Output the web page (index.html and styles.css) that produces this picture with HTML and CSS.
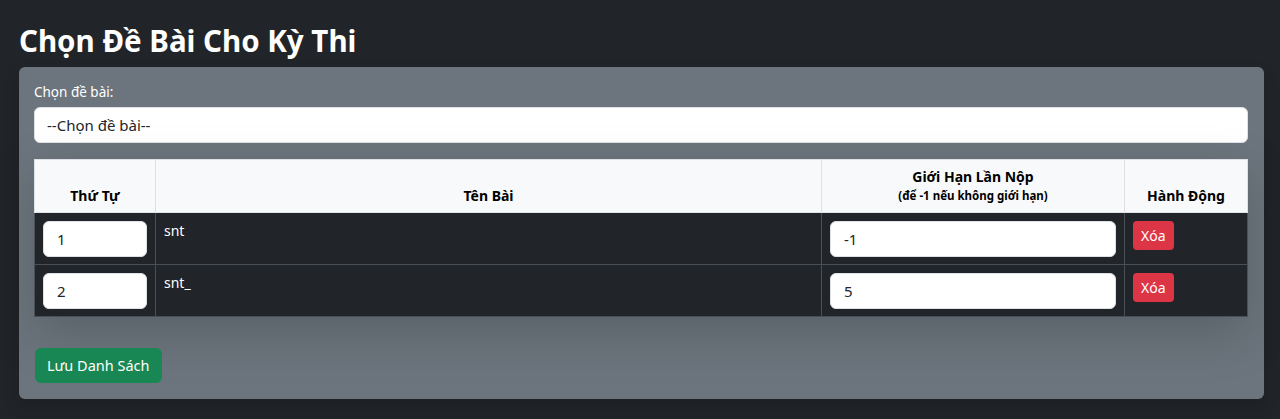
FILE: index.html
```html
<!DOCTYPE html>
<html lang="vi">
<head>
<meta charset="utf-8">
<title>Chọn Đề Bài Cho Kỳ Thi</title>
<link rel="stylesheet" href="styles.css">
</head>
<body>
<div class="page">
  <h2 class="title">Chọn Đề Bài Cho Kỳ Thi</h2>
  <div class="panel">
    <label class="label" for="de">Chọn đề bài:</label>
    <div class="select" id="de">--Chọn đề bài--</div>
    <table class="tbl">
      <thead>
        <tr>
          <th class="c-order">Thứ Tự</th>
          <th class="c-name">Tên Bài</th>
          <th class="c-limit">Giới Hạn Lần Nộp<br><small>(để -1 nếu không giới hạn)</small></th>
          <th class="c-act">Hành Động</th>
        </tr>
      </thead>
      <tbody>
        <tr>
          <td><div class="input">1</div></td>
          <td>snt</td>
          <td><div class="input">-1</div></td>
          <td><span class="btn-del">Xóa</span></td>
        </tr>
        <tr>
          <td><div class="input">2</div></td>
          <td>snt_</td>
          <td><div class="input">5</div></td>
          <td><span class="btn-del">Xóa</span></td>
        </tr>
      </tbody>
    </table>
    <div class="actions"><span class="btn-save">Lưu Danh Sách</span></div>
  </div>
</div>
</body>
</html>
```
FILE: styles.css
```css
* { box-sizing: border-box; }
html, body { margin: 0; padding: 0; }
body {
  background: #212529;
  color: #dee2e6;
  font-family: "Noto Sans", "Open Sans", sans-serif;
  font-size: 16px;
  line-height: 1.5;
  height: 419px;
  overflow: hidden;
}
.page {
  padding: 23px 16px 0 19px;
}
.title {
  margin: 0 0 8px 0;
  font-size: 29.5px;
  line-height: 36px;
  font-weight: 700;
  color: #fff;
}
.panel {
  background: #6c757d;
  border-radius: 6px;
  padding: 15px 16px 16px 15px;
  box-shadow: 0 8px 16px rgba(0,0,0,.15);
}
.label {
  display: block;
  font-size: 13.5px;
  line-height: 20px;
  color: #fff;
  margin-bottom: 5px;
}
.select {
  background: #fff;
  color: #212529;
  border: 1px solid #dee2e6;
  border-radius: 6px;
  height: 36px;
  padding: 6px 12px;
  font-size: 15px;
  line-height: 22px;
  margin-bottom: 16px;
}
.tbl {
  width: 100%;
  border-collapse: collapse;
  font-size: 14px;
  box-shadow: 0 16px 48px rgba(0,0,0,.175);
}
.tbl th, .tbl td {
  border: 1px solid #495057;
  padding: 8px 8px 7px;
}
.tbl th {
  background: #f8f9fa;
  color: #000;
  border-color: #dee2e6;
  font-weight: 700;
  text-align: center;
  vertical-align: bottom;
  line-height: 18px;
  padding: 8px 8px 7px;
}
.tbl th small { font-size: 11.5px; }
.tbl td {
  background: #212529;
  color: #fff;
  vertical-align: top;
  line-height: 20px;
}
.c-order { width: 121px; }
.c-limit { width: 303px; }
.c-act { width: 123px; }
.input {
  background: #fff;
  color: #212529;
  border: 1px solid #dee2e6;
  border-radius: 6px;
  height: 36px;
  padding: 6px 13px;
  font-size: 15px;
  line-height: 22px;
}
.btn-del {
  display: inline-block;
  background: #dc3545;
  color: #fff;
  border-radius: 4px;
  padding: 3px 8px;
  font-size: 14px;
  line-height: 23px;
}
.actions { margin-top: 31px; }
.btn-save {
  display: inline-block;
  background: #198754;
  color: #fff;
  border-radius: 6px;
  padding: 6px 12px;
  font-size: 14.5px;
  line-height: 23px;
  margin-left: 1px;
}
```
